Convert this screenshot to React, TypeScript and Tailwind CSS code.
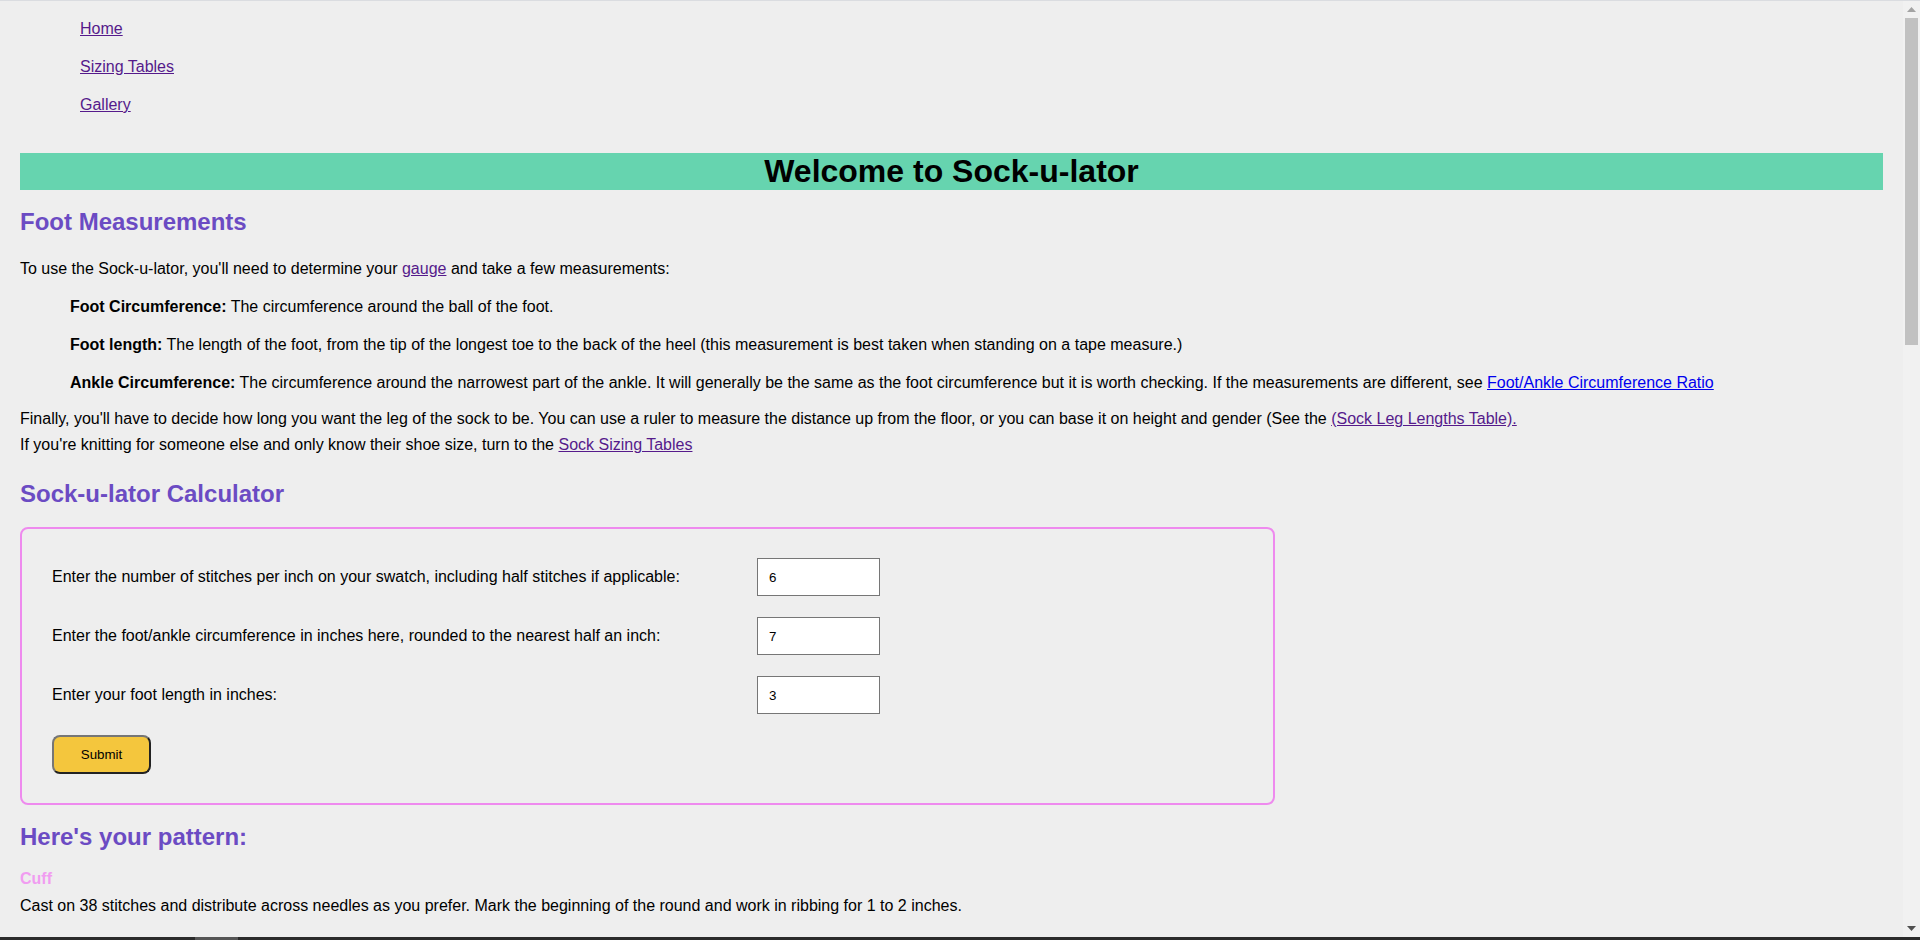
import React from "react";

const visited = "text-[#551a8b] underline";

function Field({ label, value }: { label: string; value: string }) {
    return (
        <div className="flex items-center h-[38px]">
            <label className="w-[705px] shrink-0 leading-[22px]">{label}</label>
            <input
                type="text"
                defaultValue={value}
                className="w-[123px] h-[38px] border border-[#767676] bg-white px-[11px] text-[13.33px] text-black outline-none"
            />
        </div>
    );
}

export default function App() {
    return (
        <div className="h-[940px] flex flex-col overflow-hidden border-t border-[#dadce0] bg-[#eeeeee] text-black font-['Liberation_Sans',Arial,sans-serif] text-[16px]">
            <div className="flex flex-1 min-h-0">
                {/* Page */}
                <div className="flex-1 min-w-0 px-[20px] overflow-hidden">
                    <nav className="pt-[9px] pl-[60px]">
                        <ul>
                            {["Home", "Sizing Tables", "Gallery"].map((item) => (
                                <li key={item} className="h-[38px] flex items-center">
                                    <a href="#" className={visited}>{item}</a>
                                </li>
                            ))}
                        </ul>
                    </nav>

                    <h1 className="mt-[29px] h-[37px] leading-[37px] bg-[#66d4af] text-center text-[32px] font-bold">
                        Welcome to Sock-u-lator
                    </h1>

                    <h2 className="mt-[18px] leading-[28px] text-[24px] font-bold text-[#6b4bc3]">Foot Measurements</h2>

                    <p className="mt-[22px] leading-[22px]">
                        To use the Sock-u-lator, you'll need to determine your <a href="#" className={visited}>gauge</a> and take a few measurements:
                    </p>
                    <p className="mt-[16px] ml-[50px] leading-[22px]">
                        <b>Foot Circumference:</b> The circumference around the ball of the foot.
                    </p>
                    <p className="mt-[16px] ml-[50px] leading-[22px]">
                        <b>Foot length:</b> The length of the foot, from the tip of the longest toe to the back of the heel (this measurement is best taken when standing on a tape measure.)
                    </p>
                    <p className="mt-[16px] ml-[50px] leading-[22px]">
                        <b>Ankle Circumference:</b> The circumference around the narrowest part of the ankle. It will generally be the same as the foot circumference but it is worth checking. If the measurements are different, see{" "}
                        <a href="#" className="text-[#0000ee] underline">Foot/Ankle Circumference Ratio</a>
                    </p>
                    <p className="mt-[12px] leading-[26px]">
                        Finally, you'll have to decide how long you want the leg of the sock to be. You can use a ruler to measure the distance up from the floor, or you can base it on height and gender (See the{" "}
                        <a href="#" className={visited}>(Sock Leg Lengths Table).</a>
                        <br />
                        If you're knitting for someone else and only know their shoe size, turn to the <a href="#" className={visited}>Sock Sizing Tables</a>
                    </p>

                    <h2 className="mt-[22px] leading-[28px] text-[24px] font-bold text-[#6b4bc3]">Sock-u-lator Calculator</h2>

                    <form
                        onSubmit={(e) => e.preventDefault()}
                        className="mt-[19px] w-[1255px] border-2 border-[#ee8aee] rounded-lg px-[30px] pt-[29px] pb-[29px] flex flex-col gap-[21px]"
                    >
                        <Field label="Enter the number of stitches per inch on your swatch, including half stitches if applicable:" value="6" />
                        <Field label="Enter the foot/ankle circumference in inches here, rounded to the nearest half an inch:" value="7" />
                        <Field label="Enter your foot length in inches:" value="3" />
                        <div>
                            <button
                                type="submit"
                                className="w-[99px] h-[39px] rounded-lg border-2 border-[#767676] border-r-[#222222] border-b-[#222222] bg-[#f4c63d] text-[13.33px] text-black"
                            >
                                Submit
                            </button>
                        </div>
                    </form>

                    <h2 className="mt-[18px] leading-[28px] text-[24px] font-bold text-[#6b4bc3]">Here's your pattern:</h2>
                    <h3 className="mt-[17px] leading-[22px] font-bold text-[#f19df1]">Cuff</h3>
                    <p className="mt-[5px] leading-[22px]">
                        Cast on 38 stitches and distribute across needles as you prefer. Mark the beginning of the round and work in ribbing for 1 to 2 inches.
                    </p>
                </div>

                {/* Scrollbar */}
                <div className="w-[17px] shrink-0 bg-[#f1f1f1] flex flex-col">
                    <div className="h-[17px] flex items-center justify-center">
                        <svg width="9" height="5" viewBox="0 0 9 5"><path d="M0 5 L4.5 0 L9 5 Z" fill="#a3a3a3" /></svg>
                    </div>
                    <div className="mx-[2px] h-[327px] bg-[#c1c1c1]" />
                    <div className="flex-1" />
                    <div className="h-[17px] flex items-center justify-center">
                        <svg width="9" height="5" viewBox="0 0 9 5"><path d="M0 0 L9 0 L4.5 5 Z" fill="#505050" /></svg>
                    </div>
                </div>
            </div>
            <div className="h-[3px] shrink-0 bg-[#2b2b2b] flex">
                <div className="w-[195px]" />
                <div className="w-[43px] bg-[#555555]" />
            </div>
        </div>
    );
}
